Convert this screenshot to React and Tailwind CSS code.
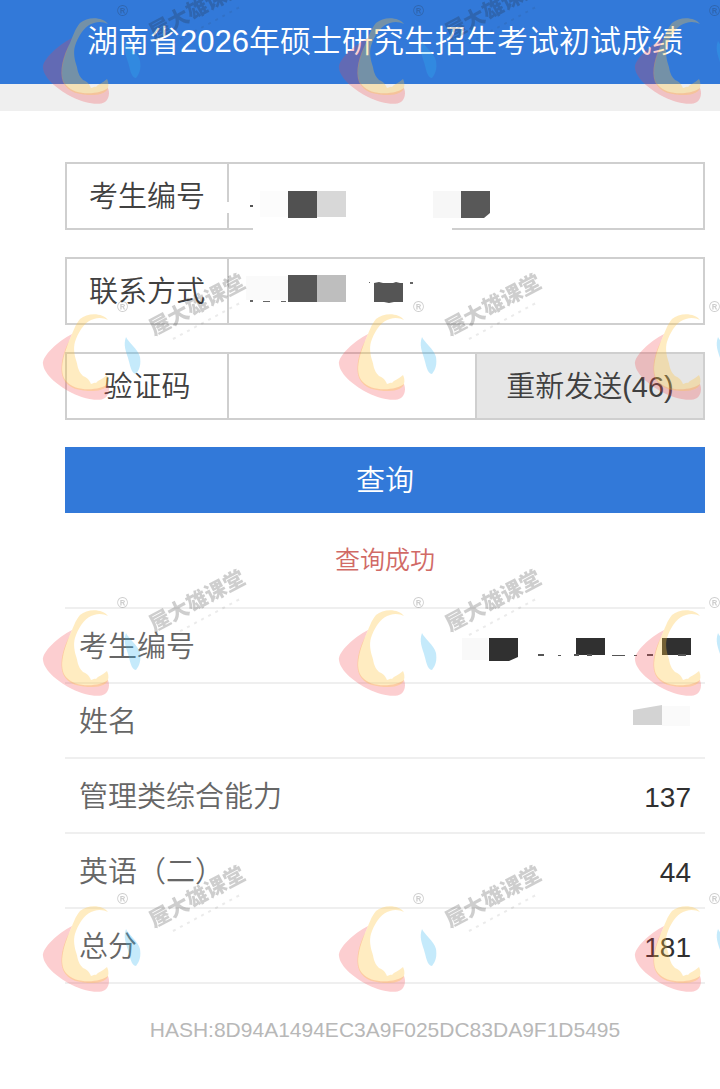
const results = [
  { label: '考生编号', mask: 'number' },
  { label: '姓名', mask: 'name' },
  { label: '管理类综合能力', value: '137' },
  { label: '英语（二）', value: '44' },
  { label: '总分', value: '181' },
];

function NumberFieldMask() {
  return (
    <svg aria-hidden="true" className="pointer-events-none absolute top-0 left-0 overflow-visible" width="300" height="70">
      <path d="M-3 38h4v11h-4zM24 64h199v6H24z" fill="#fff" />
      <path d="M21 41h3v2h-3z" fill="#555" />
      <path d="M31 27h28v26H31z" fill="#fcfcfc" />
      <path d="M59 27h29v27H59z" fill="#515151" />
      <path d="M88 27h29v26H88z" fill="#d8d8d8" />
      <path d="M204 27h28v27h-28z" fill="#f7f7f7" />
      <path d="M232 27h29v22l-6 5h-23z" fill="#585858" />
    </svg>
  );
}

function PhoneFieldMask() {
  return (
    <svg aria-hidden="true" className="pointer-events-none absolute top-0 left-0" width="300" height="60">
      <path d="M17 17h42v24H17z" fill="#fafafa" />
      <path d="M59 16h29v27H59z" fill="#565656" />
      <path d="M88 16h29v27H88z" fill="#bebebe" />
      <path d="M145 24l5-1 4 1h10l3-1 4 1h3v19h-9l-5 1-5-1h-10z" fill="#555" />
      <path d="M21 41h3v2h-3zM34 42h7v1h-7zM52 42h5v1h-5zM181 23h3v2h-3zM140 23h1v1h-1z" fill="#666" />
    </svg>
  );
}

function ResultMask({ kind }) {
  if (kind === 'number') {
    return (
      <svg aria-label="已遮盖" role="img" className="ml-auto block" width="230" height="20" overflow="visible">
        <path d="M1 0h26v22H1z" fill="#f9f9f9" />
        <path d="M28 0h29v19l-9 4H28z" fill="#303030" />
        <path d="M115 0h29v17h-29zM201 0h29v17h-29z" fill="#303030" />
        <path d="M77 16h6v2h-6zM97 17h3v1h-3zM113 16h5v2h-5zM126 16h5v2h-5zM151 17h13v1h-13zM173 17h3v1h-3zM186 16h6v2h-6zM217 16h8v2h-8z" fill="#555" />
      </svg>
    );
  }
  return (
    <svg aria-label="已遮盖" role="img" className="ml-auto block" width="58" height="40">
      <path d="M0 7l29-5v20H0z" fill="#d3d3d3" />
      <path d="M29 3h28v20H29z" fill="#fafafa" />
    </svg>
  );
}

function Watermark() {
  return (
    <svg aria-hidden="true" className="pointer-events-none absolute inset-0 h-full w-full">
      <defs>
        <pattern id="mark" width="296" height="296" y="-33" patternUnits="userSpaceOnUse">
          <path
            d="M72 71C58 78 42 93 43 101C44 112 60 124 72 130C84 136 99 139 105 135C109 132 110 126 108 121C101 127 76 130 66 118C58 108 64 90 72 71Z"
            fill="#f33a45" fillOpacity=".25"
          />
          <path
            d="M108 57C103 50 88 49 80 56C75 62 73 69 70 76C63 89 59 104 63 115C68 126 80 128 93 128C101 128 107 125 108 121C109 117 108 114 107 112C103 116 98 117 96 120C94 119 92 121 91 121C89 116 86 114 83 113C77 107 78 102 76 97C74 90 73 83 76 76C80 66 86 58 94 56C99 54 104 55 108 57Z"
            fill="#ffc63e" fillOpacity=".32"
          />
          <path d="M126 74C128 79 138 86 140 94C141 101 140 106 136 111C131 111 130 101 128 95C126 88 123 82 126 74Z" fill="#2db2ee" fillOpacity=".28" />
          <g fill="#222" fillOpacity=".22">
            <text x="117" y="49" fontSize="15" fontWeight="700" fontFamily="Liberation Sans, sans-serif">®</text>
            <text
              x="154" y="73" fontSize="21" fontWeight="900"
              fontFamily="Noto Sans CJK SC, sans-serif"
              transform="rotate(-28 154 73)"
            >屋大雄课堂</text>
          </g>
          <path d="M173 76L240 40" stroke="#222" strokeOpacity=".09" strokeWidth="2" strokeDasharray="3 5" />
        </pattern>
      </defs>
      <rect width="100%" height="100%" fill="url(#mark)" />
    </svg>
  );
}

const row = 'flex h-[68px] border-2 border-[#cfcfcf] text-[29px] text-[#404040]';
const label = 'flex w-[162px] shrink-0 items-center justify-center border-r-2 border-[#cfcfcf] pt-1';
const input = 'h-full w-full min-w-0 bg-transparent px-4 outline-none';

export default function App() {
  return (
    <div className="relative min-h-screen overflow-hidden bg-white font-['Liberation_Sans','Noto_Sans_CJK_SC',sans-serif] font-[350]">
      <header className="flex h-[84px] items-center justify-center bg-[#3279d9] pl-[50px]">
        <h1 className="text-[31px] font-[350] whitespace-nowrap text-white">湖南省2026年硕士研究生招生考试初试成绩</h1>
      </header>
      <div className="h-[27px] bg-[#efefef]" />

      <main className="pt-[51px] pr-[15px] pb-12 pl-[65px]">
        <form className="flex flex-col gap-[27px]" onSubmit={(e) => e.preventDefault()}>
          <div className={row}>
            <label htmlFor="number" className={label}>考生编号</label>
            <div className="relative min-w-0 flex-1">
              <input id="number" className={input} />
              <NumberFieldMask />
            </div>
          </div>
          <div className={row}>
            <label htmlFor="phone" className={label}>联系方式</label>
            <div className="relative min-w-0 flex-1">
              <input id="phone" type="tel" className={input} />
              <PhoneFieldMask />
            </div>
          </div>
          <div className={row}>
            <label htmlFor="code" className={label}>验证码</label>
            <div className="min-w-0 flex-1">
              <input id="code" inputMode="numeric" className={input} />
            </div>
            <button type="button" className="w-[228px] shrink-0 border-l-2 border-[#cfcfcf] bg-[#e6e6e6] pt-1">重新发送(46)</button>
          </div>
          <button type="submit" className="h-[66px] bg-[#3279d9] pt-1 text-[29px] text-white">查询</button>
        </form>

        <p className="py-7 text-center text-[25px] leading-[38px] text-[#d16a66]">查询成功</p>

        <table className="w-full border-collapse text-[29px]">
          <tbody>
            {results.map((r) => (
              <tr key={r.label} className="h-[75px] border-y-2 border-[#efefef]">
                <th scope="row" className="pt-1 pl-[14px] text-left font-[350] text-[#666666]">{r.label}</th>
                <td className="pt-1 pr-[14px] text-right text-[28px] text-[#303030]">
                  {r.mask ? <ResultMask kind={r.mask} /> : r.value}
                </td>
              </tr>
            ))}
          </tbody>
        </table>

        <p className="pt-[30px] text-center text-[21px] leading-8 text-[#b8b8b8]">HASH:8D94A1494EC3A9F025DC83DA9F1D5495</p>
      </main>
      <Watermark />
    </div>
  );
}
